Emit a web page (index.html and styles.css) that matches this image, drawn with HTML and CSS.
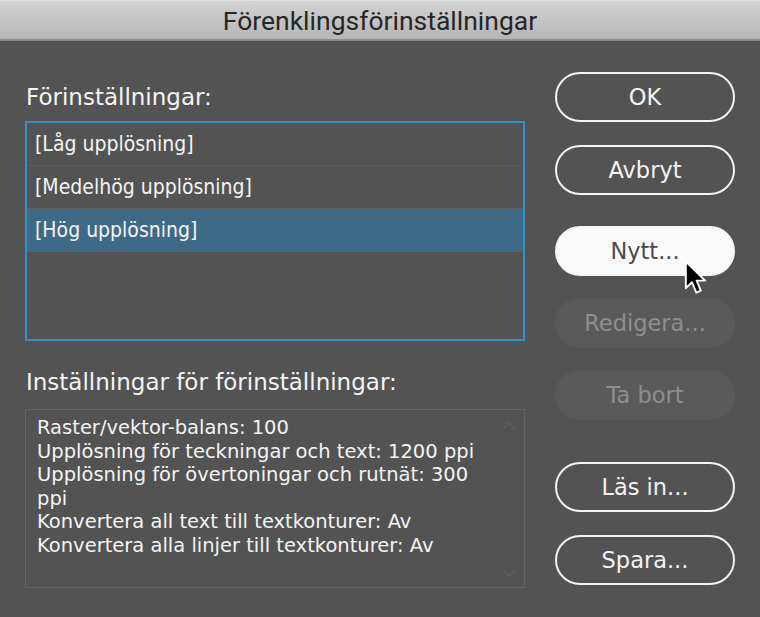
FILE: index.html
```html
<!DOCTYPE html>
<html lang="sv">
<head>
<meta charset="utf-8">
<title>Förenklingsförinställningar</title>
<link rel="stylesheet" href="styles.css">
</head>
<body>
<div class="dialog">
  <div class="titlebar">Förenklingsförinställningar</div>
  <div class="content">
    <div class="left">
      <div class="label">Förinställningar:</div>
      <div class="listbox">
        <div class="row">[Låg upplösning]</div>
        <div class="row">[Medelhög upplösning]</div>
        <div class="row selected">[Hög upplösning]</div>
      </div>
      <div class="label label2">Inställningar för förinställningar:</div>
      <div class="details">
        <div class="details-text">Raster/vektor-balans: 100<br>Upplösning för teckningar och text: 1200 ppi<br>Upplösning för övertoningar och rutnät: 300 ppi<br>Konvertera all text till textkonturer: Av<br>Konvertera alla linjer till textkonturer: Av</div>
        <div class="scroll">
          <svg class="chev" width="14" height="8" viewBox="0 0 14 8"><path d="M1 7 L7 1 L13 7" fill="none" stroke="#5f5f5f" stroke-width="1.5"/></svg>
          <svg class="chev" width="14" height="8" viewBox="0 0 14 8"><path d="M1 1 L7 7 L13 1" fill="none" stroke="#5f5f5f" stroke-width="1.5"/></svg>
        </div>
      </div>
    </div>
    <div class="right">
      <div class="btn">OK</div>
      <div class="btn">Avbryt</div>
      <div class="btn primary">Nytt...</div>
      <div class="btn disabled">Redigera...</div>
      <div class="btn disabled">Ta bort</div>
      <div class="btn load">Läs in...</div>
      <div class="btn">Spara...</div>
    </div>
  </div>
  <svg class="cursor" width="23" height="37" viewBox="0 0 14 23">
    <path d="M1 1 L1 17.5 L4.8 13.8 L7.5 20.3 L10.3 19.1 L7.7 12.8 L13 12.8 Z" fill="#000" stroke="#fff" stroke-width="1.2" stroke-linejoin="round"/>
  </svg>
</div>
</body>
</html>
```
FILE: styles.css
```css
html, body {
  margin: 0;
  padding: 0;
  background: #535353;
}
.dialog {
  position: relative;
  width: 760px;
  height: 617px;
  background: #535353;
  overflow: hidden;
  font-family: "DejaVu Sans", sans-serif;
  color: #f4f4f4;
}
.titlebar {
  height: 38px;
  background: linear-gradient(#d2d2d2, #b6b6b6);
  border-top: 1px solid #e0e0e0;
  border-bottom: 2px solid #8e8e8e;
  text-align: center;
  font-family: "Roboto", "Liberation Sans", sans-serif;
  font-size: 26.5px;
  line-height: 40px;
  color: #262626;
}
.content {
  display: flex;
  padding: 0 25px;
}
.left {
  width: 500px;
  display: flex;
  flex-direction: column;
}
.label {
  font-size: 23px;
  line-height: 28px;
  height: 28px;
  margin-top: 42px;
  margin-left: 1px;
}
.listbox {
  margin-top: 10px;
  height: 216px;
  border: 2px solid #3a8ec6;
  background: #535353;
}
.row {
  height: 42px;
  border-bottom: 1px solid #5e5e5e;
  font-family: "DejaVu Sans Condensed", "DejaVu Sans", sans-serif;
  font-stretch: condensed;
  font-size: 21px;
  line-height: 42px;
  padding-left: 8px;
}
.row.selected {
  background: #3e6a88;
  border-bottom-color: #3e6a88;
}
.label2 {
  margin-top: 27px;
}
.details {
  margin-top: 13px;
  height: 177px;
  border: 1px solid #666666;
  display: flex;
  justify-content: space-between;
}
.details-text {
  font-size: 19.5px;
  line-height: 23.5px;
  padding: 6px 0 0 11px;
  width: 450px;
}
.scroll {
  display: flex;
  flex-direction: column;
  justify-content: space-between;
  padding: 12px 8px 10px 0;
}
.right {
  margin-left: 30px;
  width: 180px;
  display: flex;
  flex-direction: column;
  gap: 23px;
  padding-top: 31px;
}
.btn {
  height: 46px;
  border: 2px solid #f4f4f4;
  border-radius: 25px;
  text-align: center;
  font-size: 22.5px;
  line-height: 46px;
  color: #f4f4f4;
}
.btn.primary {
  background: #fafafa;
  color: #4a4a4a;
  margin-top: 8px;
}
.btn.disabled {
  background: #5a5a5a;
  border-color: #5a5a5a;
  color: #8e8e8e;
  margin-top: -1px;
}
.btn.load {
  margin-top: 19px;
}
.cursor {
  position: absolute;
  left: 684px;
  top: 260px;
}
```
